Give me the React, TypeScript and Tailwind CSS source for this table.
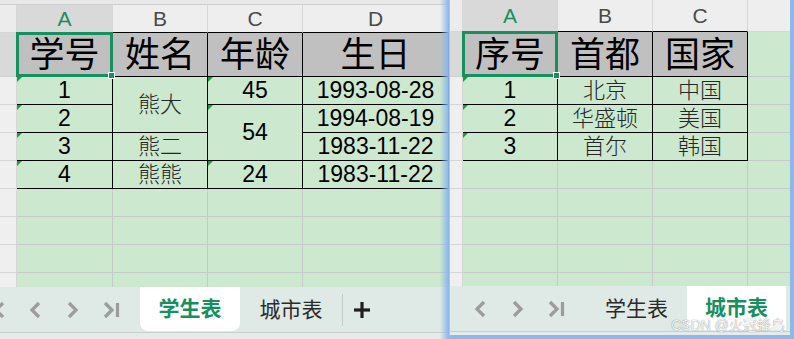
import type { ReactNode } from 'react';

const FONT = "font-['Liberation_Sans','Noto_Sans_CJK_SC',sans-serif]";
const GREEN = 'text-[#17905f]';

type Kind = 'head' | 'num' | 'name';

interface CellSpec {
  t: string;
  kind: Kind;
  h?: string;
  mark?: boolean;
  sel?: boolean;
}

interface ColSpec {
  letter: string;
  w: string;
  active?: boolean;
  table: boolean;
  cells: CellSpec[];
}

function Mark() {
  return (
    <div className="absolute left-0 top-0 h-[5px] w-[5px] bg-[#1f9a3c] [clip-path:polygon(0_0,100%_0,0_100%)]" />
  );
}

function Selection() {
  return (
    <div className="pointer-events-none absolute -inset-px z-10 border-[3px] border-[#17905f]">
      <div className="absolute -bottom-[5px] -right-[5px] h-[7px] w-[7px] border border-white bg-[#17905f]" />
    </div>
  );
}

function TableCell({ cell, rowH }: { cell: CellSpec; rowH: string }) {
  const h = cell.h ?? (cell.kind === 'head' ? rowH : 'h-[28px]');
  const text =
    cell.kind === 'head'
      ? 'bg-[#c0c0c0] text-[35px] text-black'
      : cell.kind === 'num'
        ? 'text-[23px] text-black'
        : 'text-[22px] font-light text-[#262626]';
  return (
    <div
      className={`relative flex ${h} shrink-0 items-center justify-center border-b border-r border-black leading-none ${text}`}
    >
      {cell.mark && <Mark />}
      {cell.sel && <Selection />}
      <span>{cell.t}</span>
    </div>
  );
}

function Column({ col, headH, rowH }: { col: ColSpec; headH: string; rowH: string }) {
  const blanks = 12 - col.cells.length;
  return (
    <div className={`flex ${col.w} shrink-0 flex-col`}>
      <div
        className={`flex ${headH} shrink-0 items-center justify-center border-r border-[#d6d6d6] text-[21px] leading-none ${
          col.active ? `bg-[#d9d9d9] ${GREEN}` : 'bg-[#eeeeee] text-[#4a4a4a]'
        } ${col.table ? 'border-b border-b-black' : 'border-b border-b-[#d6d6d6]'}`}
      >
        {col.letter}
      </div>
      {!col.table && <div className={`${rowH} shrink-0 border-b border-r border-[#c9c9c9]`} />}
      {col.cells.map((c, i) => (
        <TableCell key={i} cell={c} rowH={rowH} />
      ))}
      {Array.from({ length: blanks }).map((_, i) => (
        <div key={i} className="h-[28px] shrink-0 border-b border-r border-[#c9c9c9]" />
      ))}
    </div>
  );
}

function RowHeads({ w, headH, rowH }: { w: string; headH: string; rowH: string }) {
  return (
    <div className={`flex ${w} shrink-0 flex-col bg-[#efefef]`}>
      <div className={`${headH} shrink-0 border-b border-r border-[#d6d6d6] bg-[#ececec]`} />
      <div className={`${rowH} shrink-0 border-b border-r border-[#cfcfcf] bg-[#d9d9d9]`} />
      {Array.from({ length: 10 }).map((_, i) => (
        <div key={i} className="h-[28px] shrink-0 border-b border-r border-[#d6d6d6]" />
      ))}
    </div>
  );
}

function ChevLeft({ cut }: { cut?: boolean }) {
  return (
    <svg width="18" height="18" viewBox="0 0 18 18" fill="none" stroke="#9c9c9c" strokeWidth="3.2">
      {cut && <line x1="2.5" y1="2" x2="2.5" y2="16" />}
      <polyline points={cut ? '15,2 8,9 15,16' : '13,2 6,9 13,16'} />
    </svg>
  );
}

function ChevRight({ bar }: { bar?: boolean }) {
  return (
    <svg width="18" height="18" viewBox="0 0 18 18" fill="none" stroke="#9c9c9c" strokeWidth="3.2">
      <polyline points={bar ? '3,2 10,9 3,16' : '5,2 12,9 5,16'} />
      {bar && <line x1="15.5" y1="2" x2="15.5" y2="16" />}
    </svg>
  );
}

function NavButtons() {
  return (
    <>
      <div className="flex w-[38px] shrink-0 justify-center">
        <ChevLeft cut />
      </div>
      <div className="flex w-[38px] shrink-0 justify-center">
        <ChevLeft />
      </div>
      <div className="flex w-[38px] shrink-0 justify-center">
        <ChevRight />
      </div>
      <div className="flex w-[38px] shrink-0 justify-center">
        <ChevRight bar />
      </div>
    </>
  );
}

function Tab({ children, active, w, rounded }: { children: ReactNode; active?: boolean; w: string; rounded?: boolean }) {
  if (active) {
    return (
      <div
        className={`flex ${w} h-[44px] shrink-0 items-center justify-center self-start bg-white text-[21px] font-bold ${GREEN} ${
          rounded ? 'rounded-b-[8px]' : ''
        }`}
      >
        {children}
      </div>
    );
  }
  return (
    <div className={`flex ${w} shrink-0 items-center justify-center text-[21px] text-[#2b2b2b]`}>{children}</div>
  );
}

const leftCols: ColSpec[] = [
  {
    letter: 'A',
    w: 'w-[96px]',
    active: true,
    table: true,
    cells: [
      { t: '学号', kind: 'head', sel: true },
      { t: '1', kind: 'num', mark: true },
      { t: '2', kind: 'num', mark: true },
      { t: '3', kind: 'num', mark: true },
      { t: '4', kind: 'num', mark: true },
    ],
  },
  {
    letter: 'B',
    w: 'w-[95px]',
    table: true,
    cells: [
      { t: '姓名', kind: 'head' },
      { t: '熊大', kind: 'name', h: 'h-[56px]' },
      { t: '熊二', kind: 'name' },
      { t: '熊熊', kind: 'name' },
    ],
  },
  {
    letter: 'C',
    w: 'w-[95px]',
    table: true,
    cells: [
      { t: '年龄', kind: 'head' },
      { t: '45', kind: 'num', mark: true },
      { t: '54', kind: 'num', h: 'h-[56px]', mark: true },
      { t: '24', kind: 'num', mark: true },
    ],
  },
  {
    letter: 'D',
    w: 'w-[146px]',
    table: true,
    cells: [
      { t: '生日', kind: 'head' },
      { t: '1993-08-28', kind: 'num' },
      { t: '1994-08-19', kind: 'num' },
      { t: '1983-11-22', kind: 'num' },
      { t: '1983-11-22', kind: 'num' },
    ],
  },
];

const rightCols: ColSpec[] = [
  {
    letter: 'A',
    w: 'w-[95px]',
    active: true,
    table: true,
    cells: [
      { t: '序号', kind: 'head', sel: true },
      { t: '1', kind: 'num', mark: true },
      { t: '2', kind: 'num', mark: true },
      { t: '3', kind: 'num', mark: true },
    ],
  },
  {
    letter: 'B',
    w: 'w-[95px]',
    table: true,
    cells: [
      { t: '首都', kind: 'head' },
      { t: '北京', kind: 'name' },
      { t: '华盛顿', kind: 'name' },
      { t: '首尔', kind: 'name' },
    ],
  },
  {
    letter: 'C',
    w: 'w-[95px]',
    table: true,
    cells: [
      { t: '国家', kind: 'head' },
      { t: '中国', kind: 'name' },
      { t: '美国', kind: 'name' },
      { t: '韩国', kind: 'name' },
    ],
  },
  { letter: '', w: 'w-[60px]', table: false, cells: [] },
];

export default function App() {
  return (
    <div className={`flex h-[339px] w-[794px] overflow-hidden bg-[#e3ebe9] ${FONT}`}>
      {/* left window: 学生表 */}
      <div className="relative flex w-[449px] shrink-0 flex-col overflow-hidden">
        <div className="h-[5px] shrink-0 border-b border-[#cfcfcf] bg-[#e8e8e8]" />
        <div className="flex h-[282px] shrink-0 overflow-hidden bg-[#cce8cf]">
          <RowHeads w="w-[17px]" headH="h-[28px]" rowH="h-[44px]" />
          {leftCols.map((c) => (
            <Column key={c.letter} col={c} headH="h-[28px]" rowH="h-[44px]" />
          ))}
        </div>
        <div className="flex h-[46px] shrink-0 items-center border-b border-[#c9cfcd] bg-[#dfe9e6]">
          <div className="-ml-[22px] flex shrink-0">
            <NavButtons />
          </div>
          <div className="ml-[10px] flex h-full">
            <Tab active rounded w="w-[100px]">
              学生表
            </Tab>
            <Tab w="w-[102px]">城市表</Tab>
          </div>
          <div className="h-[32px] w-px bg-[#c5cbc9]" />
          <div className="flex w-[38px] justify-center">
            <svg width="18" height="18" viewBox="0 0 18 18" stroke="#1f1f1f" strokeWidth="3.2">
              <line x1="9" y1="1" x2="9" y2="17" />
              <line x1="1" y1="9" x2="17" y2="9" />
            </svg>
          </div>
        </div>
        <div className="h-[6px] shrink-0 bg-[#e4ebea]" />
        <div className="pointer-events-none absolute inset-y-0 right-0 w-[9px] bg-linear-to-r from-transparent to-[#86b4ec]" />
      </div>

      {/* right window: 城市表 */}
      <div className="relative flex flex-1 flex-col overflow-hidden border-b-4 border-l border-r-4 border-b-[#8fb8ea] border-l-[#a9c7ee] border-r-[#8fb8ea]">
        <div className="flex h-[286px] shrink-0 overflow-hidden bg-[#cce8cf]">
          <RowHeads w="w-[13px]" headH="h-[32px]" rowH="h-[45px]" />
          {rightCols.map((c, i) => (
            <Column key={i} col={c} headH="h-[32px]" rowH="h-[45px]" />
          ))}
        </div>
        <div className="flex h-[46px] shrink-0 items-center border-b border-[#c9cfcd] bg-[#dfe9e6]">
          <div className="-ml-[27px] flex shrink-0">
            <NavButtons />
          </div>
          <div className="ml-[11px] flex h-full">
            <Tab w="w-[101px]">学生表</Tab>
            <Tab active w="w-[99px]">
              城市表
            </Tab>
          </div>
        </div>
        <div className="flex-1 bg-[#e4ebea]" />
        <div className="pointer-events-none absolute bottom-[3px] right-[5px] text-[14px] leading-none text-white/90 [text-shadow:0_0_1px_rgba(0,0,0,0.6)]">
          CSDN @火冠蜂鸟
        </div>
      </div>
    </div>
  );
}
